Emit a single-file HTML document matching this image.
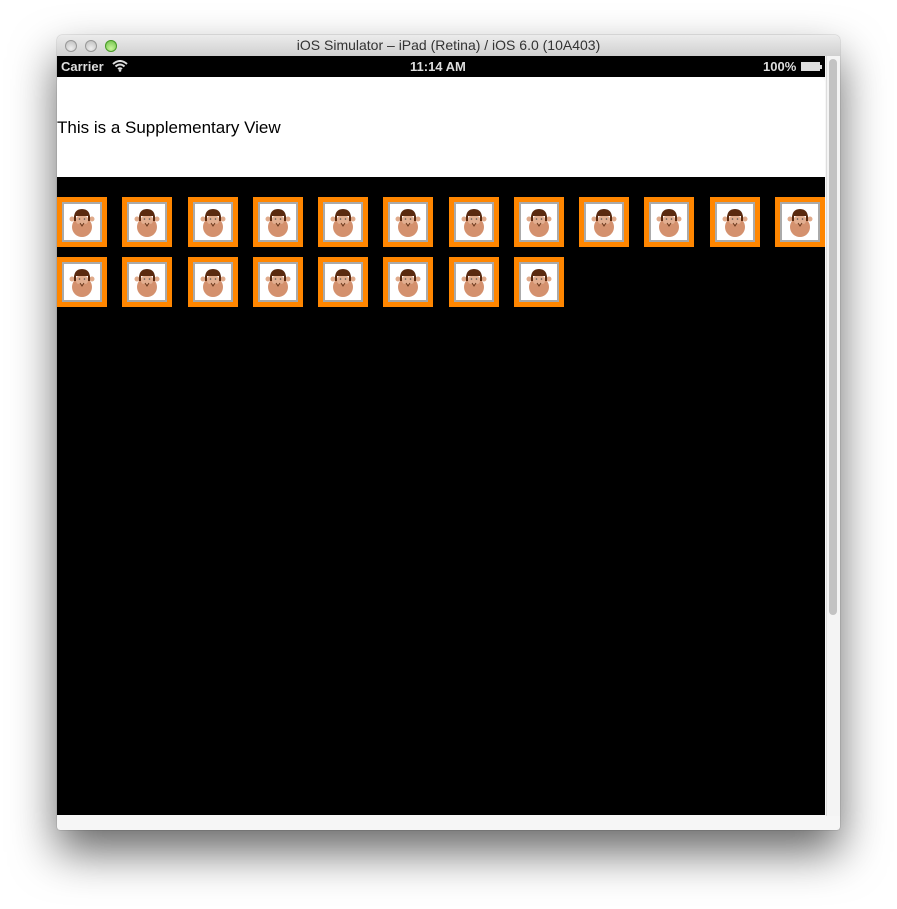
<!DOCTYPE html>
<html><head><style>
body{margin:0;width:897px;height:909px;background:#fff;position:relative;overflow:hidden;font-family:"Liberation Sans",sans-serif}
.win{position:absolute;left:57px;top:35px;width:783px;height:795px;border-radius:5px 5px 3px 3px;box-shadow:0 22px 45px rgba(0,0,0,.6),0 0 1px rgba(0,0,0,.5);background:#f6f6f6;overflow:hidden}
.tb{position:absolute;left:0;top:0;width:783px;height:21px;background:linear-gradient(#ececec,#d0d0d0);text-align:center;font-size:14px;line-height:21px;color:#333}
.dot{position:absolute;top:5px;width:12px;height:12px;border-radius:50%;background:radial-gradient(circle at 50% 70%,#eee,#b4b4b4);box-shadow:inset 0 0 0 1px #999}
.sb{position:absolute;left:0;top:21px;width:768px;height:21px;background:#000;color:#ddd;font-weight:bold;font-size:13px;line-height:21px}
.hdr{position:absolute;left:0;top:42px;width:768px;height:100px;background:#fff;border-radius:5px 5px 0 0;font-size:17px}
.blk{position:absolute;left:0;top:142px;width:768px;height:638px;background:#000}
.t{position:absolute;width:40px;height:40px;background:#ff8600;padding:5px}
.t div{width:36px;height:36px;border:2px solid #aaa;background:#fff;position:relative}
</style></head><body>
<div class="win">
<div class="tb">iOS Simulator – iPad (Retina) / iOS 6.0 (10A403)</div>
<div class="dot" style="left:8px"></div><div class="dot" style="left:28px"></div>
<div class="dot" style="left:48px;background:radial-gradient(circle at 50% 70%,#c8f59a,#5fb83a);box-shadow:inset 0 0 0 1px #4a9a2a"></div>
<div class="sb"><span style="position:absolute;left:4px">Carrier</span>
<svg style="position:absolute;left:55px;top:4px" width="16" height="12" viewBox="0 0 16 12"><path d="M1 4Q8 -2 15 4M3.5 6.5Q8 2.5 12.5 6.5M6 9Q8 7.5 10 9" stroke="#ddd" stroke-width="2" fill="none"/><circle cx="8" cy="10.5" r="1.3" fill="#ddd"/></svg>
<span style="position:absolute;left:353px">11:14 AM</span>
<span style="position:absolute;left:706px">100%</span>
<span style="position:absolute;left:744px;top:6px;width:17px;height:7px;border:1px solid #ddd;background:#ddd;box-sizing:content-box"></span><span style="position:absolute;left:763px;top:9px;width:2px;height:4px;background:#ddd"></span></div>
<div class="hdr"><div style="position:absolute;left:0;top:41px">This is a Supplementary View</div></div>
<div class="blk"></div>
<div style="position:absolute;left:769px;top:21px;width:14px;height:760px;background:#f4f4f4;border-left:1px solid #ddd"></div>
<div style="position:absolute;left:772px;top:24px;width:8px;height:556px;background:#c3c3c3;border-radius:4px"></div>
</div>
<div id="g"></div>
<script>
var s='';
function tile(x,y){return '<div class="t" style="left:'+x+'px;top:'+y+'px"><div><svg width="36" height="36" viewBox="0 0 36 36"><circle cx="8" cy="15" r="2.5" fill="#e0aa8a"/><circle cx="28" cy="15" r="2.5" fill="#e0aa8a"/><circle cx="18" cy="23" r="10" fill="#d4916e"/><path d="M10 17Q9 5 18 5Q27 5 26 17L24 17L24 12L12 12L12 17Z" fill="#5a2a10"/><rect x="12" y="12" width="12" height="8" rx="3" fill="#e2ae90"/><path d="M16 19L18 22L20 19" stroke="#6a3a20" stroke-width="1" fill="none"/><circle cx="15.5" cy="15" r=".8" fill="#555"/><circle cx="20.5" cy="15" r=".8" fill="#555"/></svg></div></div>';}
for(var i=0;i<12;i++)s+=tile(Math.round(57+i*65.27),197);
for(var i=0;i<8;i++)s+=tile(Math.round(57+i*65.27),257);
document.getElementById('g').innerHTML=s;
</script>
</body></html>
